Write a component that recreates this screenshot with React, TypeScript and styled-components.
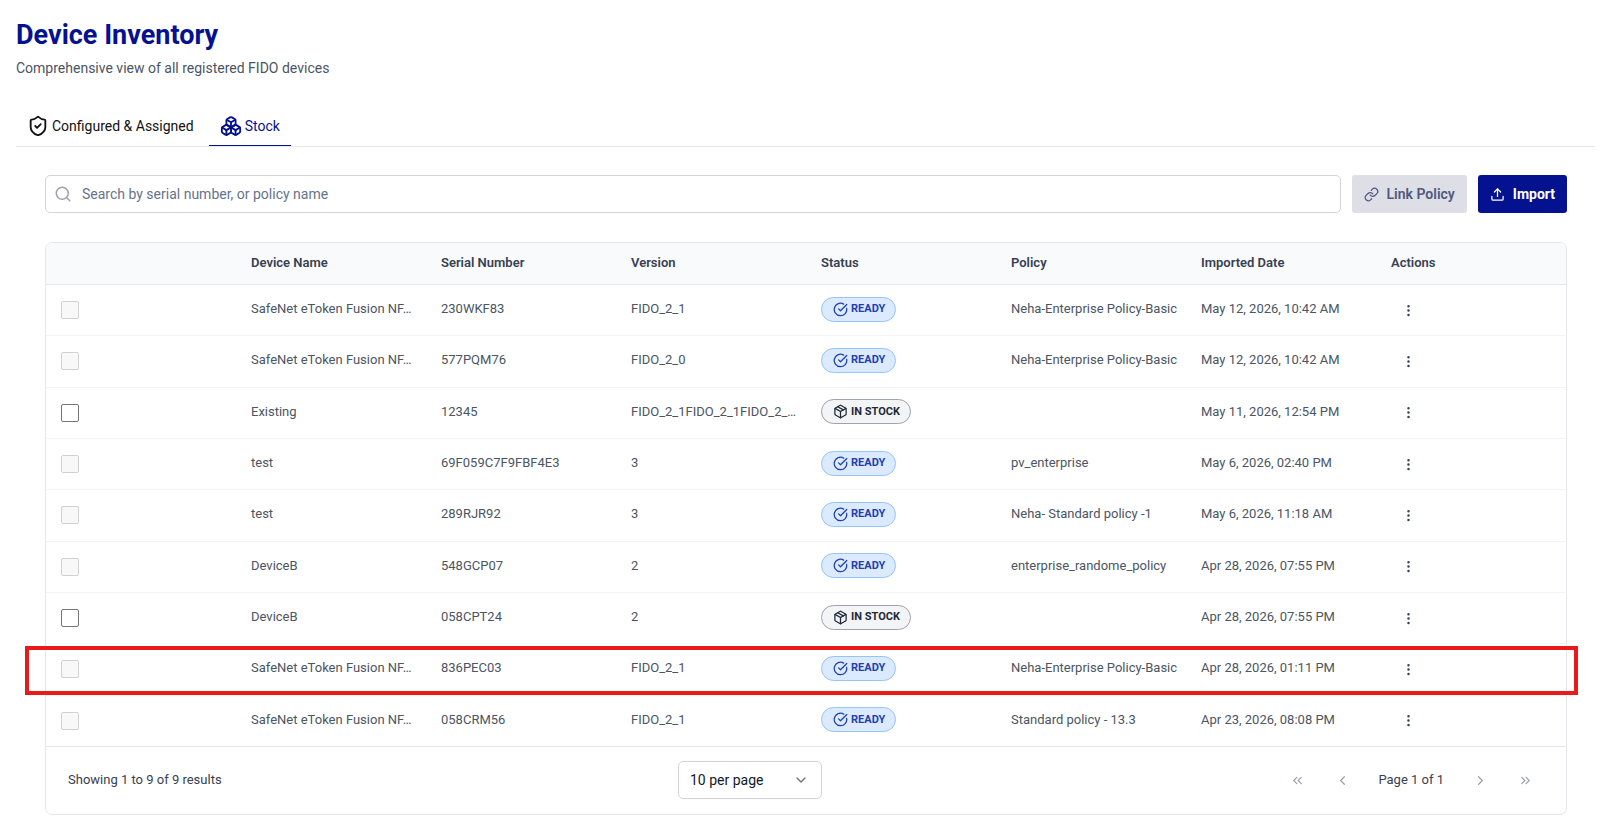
import React, { useState } from "react";
import styled, { createGlobalStyle } from "styled-components";
import {
  Boxes,
  ChevronDown,
  ChevronLeft,
  ChevronRight,
  ChevronsLeft,
  ChevronsRight,
  CircleCheckBig,
  EllipsisVertical,
  Link,
  Package,
  Search,
  ShieldCheck,
  Upload,
} from "lucide-react";

type Status = "READY" | "IN STOCK";

interface Device {
  name: string;
  serial: string;
  version: string;
  status: Status;
  policy: string;
  imported: string;
  highlighted?: boolean;
}

const devices: Device[] = [
  { name: "SafeNet eToken Fusion NF…", serial: "230WKF83", version: "FIDO_2_1", status: "READY", policy: "Neha-Enterprise Policy-Basic", imported: "May 12, 2026, 10:42 AM" },
  { name: "SafeNet eToken Fusion NF…", serial: "577PQM76", version: "FIDO_2_0", status: "READY", policy: "Neha-Enterprise Policy-Basic", imported: "May 12, 2026, 10:42 AM" },
  { name: "Existing", serial: "12345", version: "FIDO_2_1FIDO_2_1FIDO_2_…", status: "IN STOCK", policy: "", imported: "May 11, 2026, 12:54 PM" },
  { name: "test", serial: "69F059C7F9FBF4E3", version: "3", status: "READY", policy: "pv_enterprise", imported: "May 6, 2026, 02:40 PM" },
  { name: "test", serial: "289RJR92", version: "3", status: "READY", policy: "Neha- Standard policy -1", imported: "May 6, 2026, 11:18 AM" },
  { name: "DeviceB", serial: "548GCP07", version: "2", status: "READY", policy: "enterprise_randome_policy", imported: "Apr 28, 2026, 07:55 PM" },
  { name: "DeviceB", serial: "058CPT24", version: "2", status: "IN STOCK", policy: "", imported: "Apr 28, 2026, 07:55 PM" },
  { name: "SafeNet eToken Fusion NF…", serial: "836PEC03", version: "FIDO_2_1", status: "READY", policy: "Neha-Enterprise Policy-Basic", imported: "Apr 28, 2026, 01:11 PM", highlighted: true },
  { name: "SafeNet eToken Fusion NF…", serial: "058CRM56", version: "FIDO_2_1", status: "READY", policy: "Standard policy - 13.3", imported: "Apr 23, 2026, 08:08 PM" },
];

const GlobalStyle = createGlobalStyle`
  *, *::before, *::after { box-sizing: border-box; }
  body {
    margin: 0;
    background: #fff;
    color: #4b5563;
    font-family: Roboto, "Liberation Sans", sans-serif;
    font-size: 14px;
  }
  button, input, select { font-family: inherit; }
`;

const Page = styled.main`
  padding: 17px 21px 10px 16px;
`;

const Title = styled.h1`
  margin: 0;
  color: #05128f;
  font-size: 27px;
  font-weight: 700;
  line-height: 36px;
`;

const Subtitle = styled.p`
  margin: 3px 0 0;
  font-size: 14px;
  line-height: 24px;
`;

const Tabs = styled.div`
  display: flex;
  gap: 4px;
  margin-top: 27px;
  border-bottom: 1px solid #e5e7eb;
`;

const Tab = styled.button<{ $active?: boolean }>`
  display: flex;
  align-items: center;
  gap: 3px;
  height: 39px;
  padding: 0 11px;
  border: 0;
  border-bottom: 1px solid ${(p) => (p.$active ? "#05128f" : "transparent")};
  background: none;
  color: ${(p) => (p.$active ? "#05128f" : "#111")};
  font-size: 14px;
  line-height: 20px;
`;

const Panel = styled.section`
  padding: 28px 28px 0 29px;
`;

const Toolbar = styled.div`
  display: flex;
  gap: 11px;
`;

const SearchField = styled.label`
  display: flex;
  flex: 1;
  align-items: center;
  gap: 10px;
  height: 38px;
  padding: 0 8px;
  border: 1px solid #d1d5db;
  border-radius: 5px;
  color: #9ca3af;
`;

const SearchInput = styled.input`
  flex: 1;
  min-width: 0;
  padding: 0;
  border: 0;
  outline: 0;
  background: none;
  color: #111827;
  font-size: 14px;
  &::placeholder { color: #64748b; opacity: 1; }
`;

const ActionButton = styled.button<{ $primary?: boolean }>`
  display: flex;
  align-items: center;
  gap: 8px;
  height: 38px;
  padding: 0 12px;
  border: 0;
  border-radius: 3px;
  background: ${(p) => (p.$primary ? "#05128f" : "#dddee6")};
  color: ${(p) => (p.$primary ? "#fff" : "#51587f")};
  font-size: 14px;
  font-weight: ${(p) => (p.$primary ? 700 : 600)};
`;

const Card = styled.div`
  margin-top: 29px;
  border: 1px solid #e5e7eb;
  border-radius: 7px;
`;

const Table = styled.table`
  width: 100%;
  height: 504px;
  border-collapse: separate;
  border-spacing: 0;
  table-layout: fixed;
  font-size: 13px;
  line-height: 20px;
`;

const HeadCell = styled.th`
  height: 42px;
  padding: 0 15px 2px;
  border-bottom: 1px solid #e5e7eb;
  background: #f9fafc;
  color: #374151;
  font-weight: 600;
  text-align: left;
  &:first-child { border-top-left-radius: 6px; }
  &:last-child { border-top-right-radius: 6px; }
`;

const Row = styled.tr`
  position: relative;
`;

const Cell = styled.td`
  padding: 0 15px 2px;
  border-bottom: 1px solid #f3f4f6;
  white-space: nowrap;
  tr:last-child > & { border-bottom-color: #e5e7eb; }
`;

const Highlight = styled.span`
  position: absolute;
  inset: 2px -12px 1px -21px;
  border: 4px solid #e81a1a;
  pointer-events: none;
`;

const Checkbox = styled.input`
  display: block;
  width: 18px;
  height: 18px;
  margin: 2px 0 0;
  appearance: none;
  border: 1px solid #767676;
  border-radius: 2px;
  background: #fff;
  &:disabled { border-color: #d1d1d1; background: #f8f8f8; }
`;

const Badge = styled.span<{ $status: Status }>`
  display: inline-flex;
  align-items: center;
  gap: 3px;
  height: 25px;
  padding: 0 10px 0 11px;
  border: 1px solid ${(p) => (p.$status === "READY" ? "#93c5fd" : "#9ca3af")};
  border-radius: 13px;
  background: ${(p) => (p.$status === "READY" ? "#dbeafe" : "#f3f4f6")};
  color: ${(p) => (p.$status === "READY" ? "#1e40af" : "#1f2937")};
  font-size: 11px;
  font-weight: 700;
  vertical-align: middle;
`;

const MenuButton = styled.button`
  display: flex;
  margin: 2px 0 0 10px;
  padding: 0;
  border: 0;
  background: none;
  color: #374151;
`;

const Footer = styled.footer`
  display: flex;
  justify-content: space-between;
  align-items: center;
  padding: 14px 22px 15px;
  color: #374151;
  font-size: 13px;
  line-height: 20px;
`;

const SelectBox = styled.div`
  display: grid;
  align-items: center;
  width: 144px;
  height: 38px;
  color: #6b7280;
  > * { grid-area: 1 / 1; }
  > svg { justify-self: end; margin-right: 13px; pointer-events: none; }
`;

const PageSize = styled.select`
  width: 100%;
  height: 100%;
  padding: 0 11px;
  appearance: none;
  border: 1px solid #d1d5db;
  border-radius: 5px;
  background: #fff;
  color: #111827;
  font-size: 14px;
`;

const Pager = styled.nav`
  display: flex;
  justify-content: flex-end;
  align-items: center;
  gap: 7px;
`;

const PagerButton = styled.button`
  display: flex;
  align-items: center;
  justify-content: center;
  width: 38px;
  height: 38px;
  padding: 0;
  border: 0;
  background: none;
  color: #9ca3af;
`;

const PageLabel = styled.span`
  padding: 0 10px;
`;

function StatusBadge({ status }: { status: Status }) {
  return (
    <Badge $status={status}>
      {status === "READY" ? <CircleCheckBig size={15} /> : <Package size={15} />}
      {status}
    </Badge>
  );
}

function DeviceRow({ device }: { device: Device }) {
  return (
    <Row>
      <Cell>
        <Checkbox type="checkbox" disabled={device.status === "READY"} aria-label={`Select ${device.serial}`} />
        {device.highlighted && <Highlight />}
      </Cell>
      <Cell>{device.name}</Cell>
      <Cell>{device.serial}</Cell>
      <Cell>{device.version}</Cell>
      <Cell><StatusBadge status={device.status} /></Cell>
      <Cell>{device.policy}</Cell>
      <Cell>{device.imported}</Cell>
      <Cell>
        <MenuButton aria-label={`Actions for ${device.serial}`}>
          <EllipsisVertical size={15} />
        </MenuButton>
      </Cell>
    </Row>
  );
}

export default function App() {
  const [query, setQuery] = useState("");
  return (
    <>
      <GlobalStyle />
      <Page>
        <Title>Device Inventory</Title>
        <Subtitle>Comprehensive view of all registered FIDO devices</Subtitle>
        <Tabs role="tablist">
          <Tab role="tab" aria-selected={false}>
            <ShieldCheck size={22} />
            Configured &amp; Assigned
          </Tab>
          <Tab role="tab" aria-selected $active>
            <Boxes size={22} />
            Stock
          </Tab>
        </Tabs>
        <Panel>
          <Toolbar>
            <SearchField>
              <Search size={18} />
              <SearchInput
                type="text"
                aria-label="Search devices"
                placeholder="Search by serial number, or policy name"
                value={query}
                onChange={(e) => setQuery(e.target.value)}
              />
            </SearchField>
            <ActionButton disabled>
              <Link size={15} />
              Link Policy
            </ActionButton>
            <ActionButton $primary>
              <Upload size={15} />
              Import
            </ActionButton>
          </Toolbar>
          <Card>
            <Table>
              <thead>
                <tr>
                  <HeadCell aria-label="Select" />
                  <HeadCell>Device Name</HeadCell>
                  <HeadCell>Serial Number</HeadCell>
                  <HeadCell>Version</HeadCell>
                  <HeadCell>Status</HeadCell>
                  <HeadCell>Policy</HeadCell>
                  <HeadCell>Imported Date</HeadCell>
                  <HeadCell>Actions</HeadCell>
                </tr>
              </thead>
              <tbody>
                {devices.map((device) => (
                  <DeviceRow key={device.serial} device={device} />
                ))}
              </tbody>
            </Table>
            <Footer>
              <span>Showing 1 to 9 of 9 results</span>
              <SelectBox>
                <PageSize aria-label="Results per page" defaultValue="10">
                  <option value="10">10 per page</option>
                  <option value="25">25 per page</option>
                </PageSize>
                <ChevronDown size={16} />
              </SelectBox>
              <Pager aria-label="Pagination">
                <PagerButton disabled aria-label="First page"><ChevronsLeft size={15} /></PagerButton>
                <PagerButton disabled aria-label="Previous page"><ChevronLeft size={15} /></PagerButton>
                <PageLabel>Page 1 of 1</PageLabel>
                <PagerButton disabled aria-label="Next page"><ChevronRight size={15} /></PagerButton>
                <PagerButton disabled aria-label="Last page"><ChevronsRight size={15} /></PagerButton>
              </Pager>
            </Footer>
          </Card>
        </Panel>
      </Page>
    </>
  );
}
